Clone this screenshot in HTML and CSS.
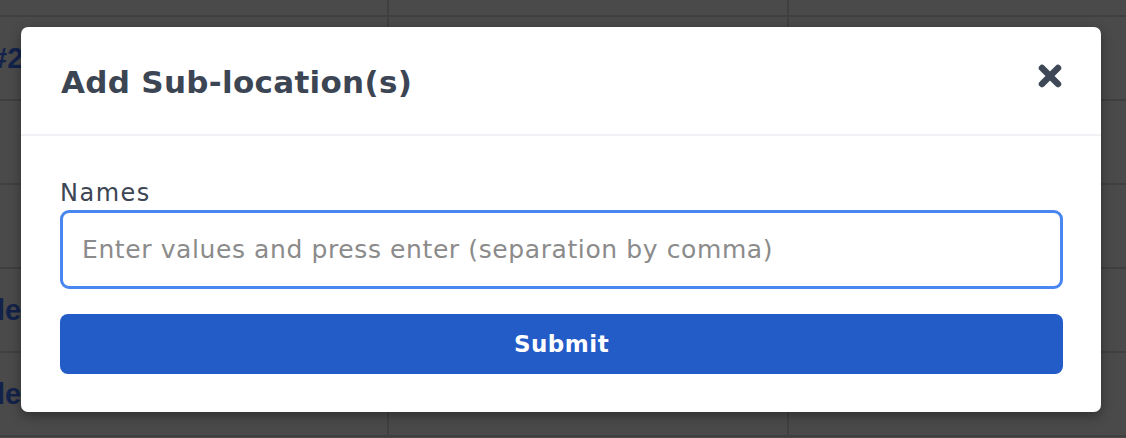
FILE: index.html
```html
<!DOCTYPE html>
<html>
<head>
<meta charset="utf-8">
<link rel="stylesheet" href="styles.css">
</head>
<body>
<div class="table">
  <div class="row row-top"><div class="cell c1"></div><div class="cell c2"></div><div class="cell c3"></div></div>
  <div class="row"><div class="cell c1"><span class="bg-text hash">#2</span></div><div class="cell c2"></div><div class="cell c3"></div></div>
  <div class="row"><div class="cell c1"></div><div class="cell c2"></div><div class="cell c3"></div></div>
  <div class="row"><div class="cell c1"></div><div class="cell c2"></div><div class="cell c3"></div></div>
  <div class="row"><div class="cell c1"><span class="bg-text">le</span></div><div class="cell c2"></div><div class="cell c3"></div></div>
  <div class="row"><div class="cell c1"><span class="bg-text">le</span></div><div class="cell c2"></div><div class="cell c3"></div></div>
</div>

<div class="modal">
  <div class="modal-header">
    <h2 class="modal-title">Add Sub-location(s)</h2>
    <button class="close" aria-label="Close">
      <svg width="26" height="26" viewBox="0 0 26 26"><path d="M5 5 L21 21 M21 5 L5 21" stroke="#3f4856" stroke-width="6.5" stroke-linecap="round"/></svg>
    </button>
  </div>
  <div class="modal-body">
    <label class="label">Names</label>
    <input class="input" type="text" placeholder="Enter values and press enter (separation by comma)">
    <button class="submit">Submit</button>
  </div>
</div>
</body>
</html>
```

FILE: styles.css
```css
* { box-sizing: border-box; }
html, body { margin: 0; padding: 0; }
body {
  width: 1126px;
  height: 438px;
  overflow: hidden;
  background: #4a4a4a;
  font-family: "DejaVu Sans", "Noto Sans", sans-serif;
  position: relative;
}
.table { display: flex; flex-direction: column; }
.row { display: flex; height: 84px; flex-shrink: 0; border-bottom: 2px solid #3f3f3f; }
.row-top { height: 17px; }
.cell { display: flex; align-items: center; overflow: hidden; }
.c1 { width: 389px; border-right: 2px solid #404040; }
.c2 { width: 400px; border-right: 2px solid #404040; }
.c3 { flex: 1; }
.bg-text {
  margin-left: -3px;
  font-family: "Liberation Sans", Arial, sans-serif;
  font-weight: 700;
  font-size: 29px;
  color: #13224a;
}
.bg-text.hash { margin-left: -9px; }
.modal {
  position: absolute;
  left: 21px;
  top: 27px;
  width: 1080px;
  height: 385px;
  background: #fff;
  border-radius: 7px;
  box-shadow: 0 4px 12px rgba(0,0,0,0.35);
}
.modal-header {
  height: 109px;
  border-bottom: 2px solid #f1f1f6;
  display: flex;
  align-items: center;
  justify-content: space-between;
  padding: 0 38px 0 40px;
}
.modal-title {
  margin: 0;
  font-size: 31px;
  font-weight: 700;
  color: #3c4553;
  letter-spacing: 0.3px;
  padding-top: 2px;
}
.close {
  border: 0;
  background: none;
  padding: 0;
  width: 26px;
  height: 26px;
  margin-top: -10px;
  display: flex;
}
.modal-body {
  padding: 43px 38px 0 39px;
  display: flex;
  flex-direction: column;
}
.label {
  font-size: 24px;
  color: #3d4654;
  letter-spacing: 1.5px;
  line-height: 28px;
  margin-bottom: 3px;
}
.input {
  height: 79px;
  border: 3px solid #4a86ef;
  border-radius: 9px;
  padding: 0 19px;
  font-family: inherit;
  font-size: 25px;
  letter-spacing: 0.6px;
  color: #333;
  outline: none;
}
.input::placeholder { color: #8b8b8b; }
.submit {
  margin-top: 25px;
  height: 60px;
  background: #245cc7;
  border: 0;
  border-radius: 8px;
  color: #fff;
  font-family: inherit;
  font-weight: 700;
  font-size: 23px;
  letter-spacing: 0.5px;
}
```
